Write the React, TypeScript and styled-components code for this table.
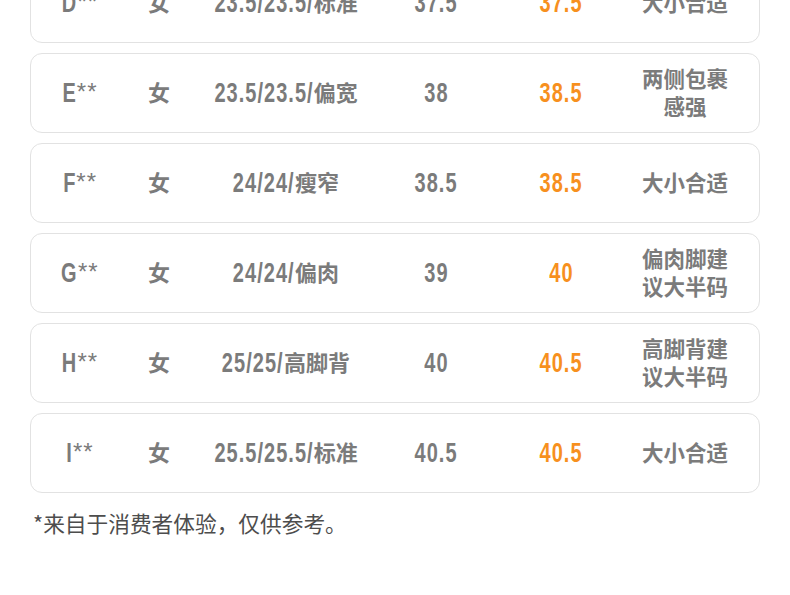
import styled, { createGlobalStyle } from "styled-components";

const GlobalStyle = createGlobalStyle`
  html, body {
    margin: 0;
    padding: 0;
    background: #ffffff;
    overflow: hidden;
  }
`;

// condensed look: Arial-metric bold squeezed horizontally
const SQUEEZE = 0.74;
const NUM_SIZE = 27;
const TRACKING = 1.4;

// advance widths (em) of Liberation Sans Bold
const advance: Record<string, number> = {
  ".": 0.278,
  "/": 0.278,
  D: 0.722,
  E: 0.667,
  F: 0.611,
  G: 0.778,
  H: 0.722,
  I: 0.278,
};
const textWidth = (s: string) =>
  s.split("").reduce((w, c) => w + (advance[c] ?? 0.556) * NUM_SIZE + TRACKING, 0);

const Page = styled.div`
  width: 790px;
  height: 595px;
  overflow: hidden;
  background: #ffffff;
`;

const List = styled.div`
  display: flex;
  flex-direction: column;
  gap: 10px;
  margin: -37px 30px 0;
`;

const Card = styled.div`
  display: grid;
  grid-template-columns: 98px 60px 194px 106px 144px 104px;
  align-items: center;
  justify-items: center;
  height: 80px;
  box-sizing: border-box;
  padding-right: 24px;
  border: 1px solid #e2e2e2;
  border-radius: 12px;
  background: #ffffff;
`;

const Cell = styled.div<{ $accent?: boolean }>`
  display: flex;
  align-items: center;
  color: ${(p) => (p.$accent ? "#f7901e" : "#7b7b7b")};
  white-space: nowrap;
`;

const NumText = styled.span<{ $w: number }>`
  display: inline-block;
  font-family: "Liberation Sans", Arial, sans-serif;
  font-weight: 700;
  font-size: ${NUM_SIZE}px;
  letter-spacing: ${TRACKING}px;
  line-height: 30px;
  transform: scaleX(${SQUEEZE});
  margin: 0 ${(p) => (-(1 - SQUEEZE) * p.$w) / 2}px;
`;

const Stars = styled.span`
  font-family: "Liberation Sans", Arial, sans-serif;
  font-size: 24px;
  letter-spacing: 1px;
  line-height: 30px;
  margin-top: -2px;
`;

const Han = styled.span`
  font-family: "Noto Sans CJK SC", sans-serif;
  font-size: 22px;
  line-height: 30px;
  font-weight: 700;
  margin-top: -4px;
`;

const Note = styled.div`
  font-family: "Noto Sans CJK SC", sans-serif;
  font-weight: 700;
  font-size: 21.5px;
  line-height: 28px;
  color: #7b7b7b;
  text-align: center;
  max-width: 90px;
  margin-top: -2px;
`;

const Footnote = styled.p`
  margin: 14px 0 0 33px;
  font-family: "Noto Sans CJK SC", sans-serif;
  font-size: 21.7px;
  color: #4d4d4d;
`;

const Num = ({ children }: { children: string }) => (
  <NumText $w={textWidth(children)}>{children}</NumText>
);

type Row = {
  name: string;
  size: string;
  foot: string;
  usual: string;
  pick: string;
  note: string;
};

const rows: Row[] = [
  { name: "D", size: "23.5/23.5/", foot: "标准", usual: "37.5", pick: "37.5", note: "大小合适" },
  { name: "E", size: "23.5/23.5/", foot: "偏宽", usual: "38", pick: "38.5", note: "两侧包裹感强" },
  { name: "F", size: "24/24/", foot: "瘦窄", usual: "38.5", pick: "38.5", note: "大小合适" },
  { name: "G", size: "24/24/", foot: "偏肉", usual: "39", pick: "40", note: "偏肉脚建议大半码" },
  { name: "H", size: "25/25/", foot: "高脚背", usual: "40", pick: "40.5", note: "高脚背建议大半码" },
  { name: "I", size: "25.5/25.5/", foot: "标准", usual: "40.5", pick: "40.5", note: "大小合适" },
];

const App = () => {
  return (
    <Page>
      <GlobalStyle />
      <List>
        {rows.map((r) => (
          <Card key={r.name}>
            <Cell>
              <Num>{r.name}</Num>
              <Stars>**</Stars>
            </Cell>
            <Cell>
              <Han>女</Han>
            </Cell>
            <Cell>
              <Num>{r.size}</Num>
              <Han>{r.foot}</Han>
            </Cell>
            <Cell>
              <Num>{r.usual}</Num>
            </Cell>
            <Cell $accent>
              <Num>{r.pick}</Num>
            </Cell>
            <Note>{r.note}</Note>
          </Card>
        ))}
      </List>
      <Footnote>*来自于消费者体验，仅供参考。</Footnote>
    </Page>
  );
};

export default App;
